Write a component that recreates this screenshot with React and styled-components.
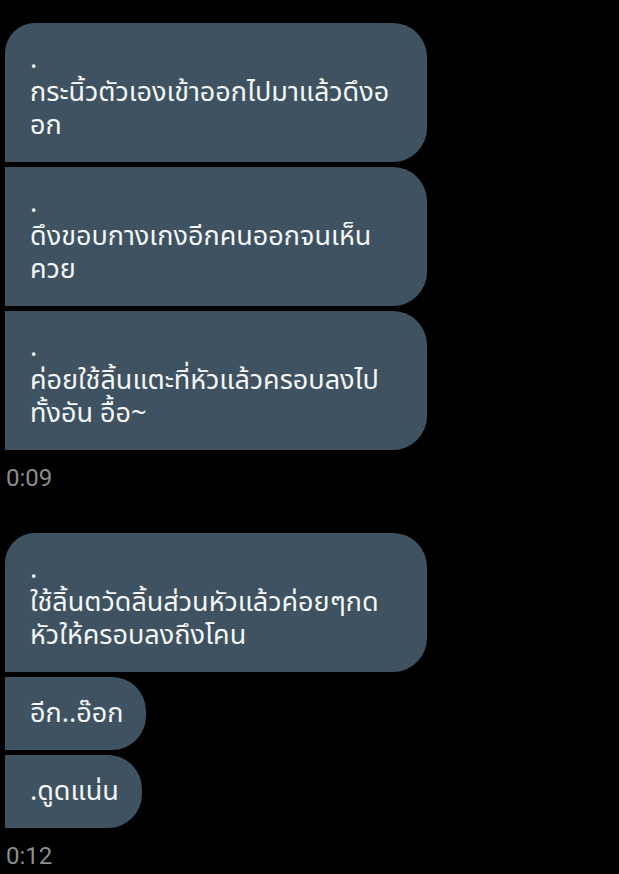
import styled, { createGlobalStyle } from "styled-components";

const Global = createGlobalStyle`
  html, body { margin: 0; background: #000; }
  body {
    font-family: "Noto Sans Thai", "Noto Sans", Roboto, sans-serif;
    -webkit-font-smoothing: antialiased;
  }
`;

const groups = [
  {
    time: "0:09",
    messages: [
      ".\nกระนิ้วตัวเองเข้าออกไปมาแล้วดึงอ\nอก",
      ".\nดึงขอบกางเกงอีกคนออกจนเห็น\nควย",
      ".\nค่อยใช้ลิ้นแตะที่หัวแล้วครอบลงไป\nทั้งอัน อื้อ~",
    ],
  },
  {
    time: "0:12",
    messages: [
      ".\nใช้ลิ้นตวัดลิ้นส่วนหัวแล้วค่อยๆกด\nหัวให้ครอบลงถึงโคน",
      "อีก..อ๊อก",
      ".ดูดแน่น",
    ],
  },
];

const Page = styled.div`
  display: flex;
  flex-direction: column;
  gap: 41px;
  padding: 23px 0 0 5px;
  min-height: 874px;
  box-sizing: border-box;
`;

const Group = styled.div`
  display: flex;
  flex-direction: column;
  align-items: flex-start;
  gap: 5px;
`;

const Bubble = styled.div`
  width: ${(p) => (p.$wide ? "422px" : "auto")};
  box-sizing: border-box;
  padding: 20px 23px 20px 25px;
  background: #3e5261;
  color: #f4f6f7;
  font-size: 27px;
  line-height: 33px;
  white-space: pre;
  border-radius: ${(p) => (p.$first ? "30px" : "0")} 34px 34px 0;
`;

const Time = styled.div`
  margin-top: 9px;
  padding-left: 1px;
  color: #8d8d8d;
  font-family: Roboto, "Noto Sans", sans-serif;
  font-size: 24px;
  line-height: 28px;
`;

export default function App() {
  return (
    <>
      <Global />
      <Page>
        {groups.map((g) => (
          <Group key={g.time}>
            {g.messages.map((m, i) => (
              <Bubble key={i} $first={i === 0} $wide={m.includes("\n")}>
                {m}
              </Bubble>
            ))}
            <Time>{g.time}</Time>
          </Group>
        ))}
      </Page>
    </>
  );
}
